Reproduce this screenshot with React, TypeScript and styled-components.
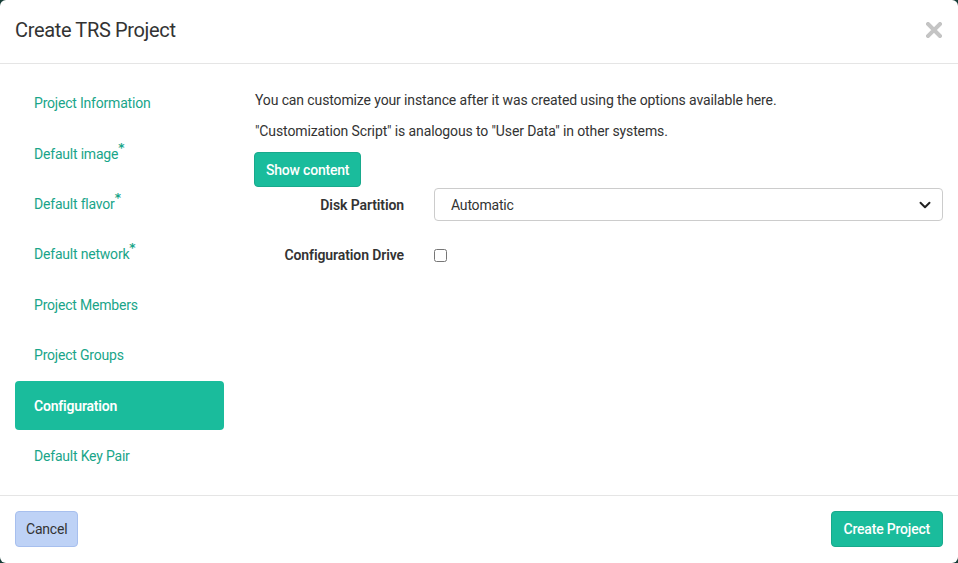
import styled, { createGlobalStyle } from 'styled-components'
import { ChevronDown } from 'lucide-react'

const GlobalStyle = createGlobalStyle`
  html, body {
    margin: 0;
    padding: 0;
    background: #163d37;
  }
  * {
    box-sizing: border-box;
  }
`

const Modal = styled.div`
  width: 958px;
  height: 563px;
  background: #fff;
  border-radius: 6px;
  display: flex;
  flex-direction: column;
  font-family: Roboto, 'Liberation Sans', sans-serif;
  font-size: 14px;
  color: #333;
  overflow: hidden;
`

const Header = styled.div`
  height: 64px;
  border-bottom: 1px solid #e5e5e5;
  display: flex;
  align-items: center;
  justify-content: space-between;
  padding: 0 16px 0 15px;
`

const Title = styled.h4`
  margin: 0 0 3px 0;
  font-size: 20px;
  font-weight: 400;
  color: #333;
  letter-spacing: -0.35px;
`

const CloseButton = styled.button`
  border: none;
  background: none;
  padding: 0;
  margin-top: -4px;
  cursor: pointer;
  display: flex;
`

const Body = styled.div`
  flex: 1;
  display: flex;
  gap: 31px;
  padding: 15px 15px 0 15px;
  border-bottom: 1px solid #e5e5e5;
`

const Nav = styled.ul`
  list-style: none;
  margin: 0;
  padding: 0;
  width: 209px;
  display: flex;
  flex-direction: column;
  gap: 2px;
`

const NavItem = styled.li<{ $active?: boolean }>`
  height: 48.4px;
  display: flex;
  align-items: center;
  padding-left: 19px;
  border-radius: 4px;
  font-size: 14px;
  letter-spacing: -0.2px;
  color: ${p => (p.$active ? '#fff' : '#19a589')};
  background: ${p => (p.$active ? '#1abc9c' : 'transparent')};
  font-weight: ${p => (p.$active ? 600 : 400)};
`

const Required = styled.sup`
  font-family: 'DejaVu Sans', sans-serif;
  font-weight: 700;
  font-size: 12px;
  line-height: 0;
  color: #19a589;
  vertical-align: 0.55em;
  margin-left: 0;
`

const Content = styled.div`
  flex: 1;
  padding-top: 11px;
`

const Help = styled.p`
  margin: 0 0 11px 0;
  line-height: 20px;
  letter-spacing: -0.12px;
`

const Button = styled.button<{ $variant: 'primary' | 'default' }>`
  height: 36px;
  padding: 0 12px;
  border-radius: 4px;
  font-family: Roboto, 'Liberation Sans', sans-serif;
  font-size: 14px;
  letter-spacing: -0.2px;
  cursor: pointer;
  border: 1px solid ${p => (p.$variant === 'primary' ? '#18a98c' : '#a7bfee')};
  background: ${p => (p.$variant === 'primary' ? '#1abc9c' : '#bed2f6')};
  color: ${p => (p.$variant === 'primary' ? '#fff' : '#333')};
  font-weight: ${p => (p.$variant === 'primary' ? 500 : 400)};
`

const CancelButton = styled(Button)`
  padding: 0 10px;
`

const ShowButton = styled(Button)`
  height: 35px;
  display: block;
  padding: 0 11px;
  margin-left: -1px;
`

const FormGrid = styled.div`
  display: grid;
  grid-template-columns: 149px 1fr;
  column-gap: 30px;
  row-gap: 17px;
  align-items: center;
  margin-top: 1px;
`

const Label = styled.label`
  text-align: right;
  font-weight: 600;
  letter-spacing: -0.1px;
`

const Select = styled.div`
  height: 33px;
  border: 1px solid #ccc;
  border-radius: 4px;
  display: flex;
  align-items: center;
  justify-content: space-between;
  padding: 0 8px 0 16px;
  color: #333;
  letter-spacing: -0.2px;
`

const Checkbox = styled.input`
  margin: 0;
  width: 13px;
  height: 13px;
`

const CheckCell = styled.div`
  height: 34px;
  display: flex;
  align-items: center;
`

const Footer = styled.div`
  height: 67px;
  display: flex;
  justify-content: space-between;
  align-items: flex-start;
  padding: 15px 15px 0 15px;
`

const steps = [
  { name: 'Project Information' },
  { name: 'Default image', required: true },
  { name: 'Default flavor', required: true },
  { name: 'Default network', required: true },
  { name: 'Project Members' },
  { name: 'Project Groups' },
  { name: 'Configuration', active: true },
  { name: 'Default Key Pair' },
]

export default function App() {
  return (
    <>
      <GlobalStyle />
      <Modal>
        <Header>
          <Title>Create TRS Project</Title>
          <CloseButton aria-label="Close">
            <svg width="16" height="16" viewBox="0 0 16 16">
              <path d="M2 2 L14 14 M14 2 L2 14" stroke="#c4c4c4" strokeWidth="4" strokeLinecap="square" />
            </svg>
          </CloseButton>
        </Header>
        <Body>
          <Nav>
            {steps.map(s => (
              <NavItem key={s.name} $active={s.active}>
                <span>
                  {s.name}
                  {s.required && <Required>*</Required>}
                </span>
              </NavItem>
            ))}
          </Nav>
          <Content>
            <Help>You can customize your instance after it was created using the options available here.</Help>
            <Help>"Customization Script" is analogous to "User Data" in other systems.</Help>
            <ShowButton $variant="primary">Show content</ShowButton>
            <FormGrid>
              <Label>Disk Partition</Label>
              <Select>
                <span>Automatic</span>
                <ChevronDown size={18} strokeWidth={2.6} color="#222" />
              </Select>
              <Label>Configuration Drive</Label>
              <CheckCell>
                <Checkbox type="checkbox" />
              </CheckCell>
            </FormGrid>
          </Content>
        </Body>
        <Footer>
          <CancelButton $variant="default">Cancel</CancelButton>
          <Button $variant="primary">Create Project</Button>
        </Footer>
      </Modal>
    </>
  )
}
